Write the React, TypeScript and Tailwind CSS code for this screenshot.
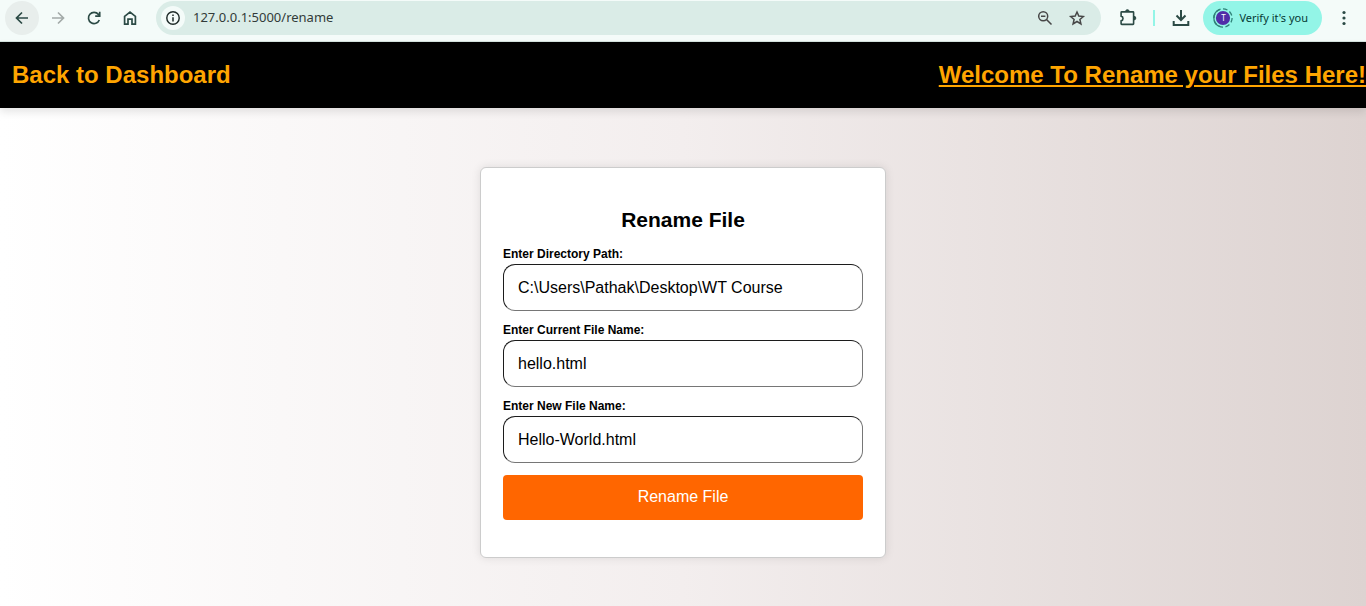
import type { ReactNode } from "react";

type FieldProps = { id: string; label: string; value: string };

function Field({ id, label, value }: FieldProps) {
  return (
    <div>
      <label htmlFor={id} className="block text-xs leading-5 font-bold">
        {label}
      </label>
      <input
        id={id}
        type="text"
        defaultValue={value}
        className="block h-[47px] w-full rounded-xl border border-t-[#1c1c1c] border-r-[#767676] border-b-[#767676] border-l-[#1c1c1c] bg-white px-3.5 text-base text-black outline-none"
      />
    </div>
  );
}

function IconButton({ label, className = "", children }: { label: string; className?: string; children: ReactNode }) {
  return (
    <button type="button" aria-label={label} className={`flex shrink-0 items-center justify-center rounded-full ${className}`}>
      {children}
    </button>
  );
}

function Icon({ children, className = "size-5" }: { children: ReactNode; className?: string }) {
  return (
    <svg viewBox="0 0 20 20" className={className} fill="none" stroke="currentColor" strokeWidth="1.7" aria-hidden="true">
      {children}
    </svg>
  );
}

function BrowserToolbar() {
  return (
    <div className="flex h-[42px] items-start border-b border-[#d5e3df] bg-[#f4fbf9] pt-px font-['Noto_Sans',sans-serif] text-[#2b4a45]">
      <div className="flex shrink-0 gap-0.5 pl-[5px]">
        <IconButton label="Back" className="size-[34px] bg-[#e8eeec]">
          <Icon>
            <path d="M16 10H4.8M10 4.5 4.5 10l5.5 5.5" />
          </Icon>
        </IconButton>
        <IconButton label="Forward" className="size-[34px] text-[#a3aba9]">
          <Icon>
            <path d="M4 10h11.2M10 4.5l5.5 5.5-5.5 5.5" />
          </Icon>
        </IconButton>
        <IconButton label="Reload" className="size-[34px]">
          <Icon>
            <path d="M15.3 12a5.6 5.6 0 1 1-.9-5.6l1.2 1.4" />
            <path d="M15.7 3.8v4.4h-4.5" />
          </Icon>
        </IconButton>
        <IconButton label="Home" className="size-[34px]">
          <Icon>
            <path d="M4.6 16.2V8.3L10 4.1l5.4 4.2v7.9H12v-5H8v5z" />
          </Icon>
        </IconButton>
      </div>
      <div className="ml-[9px] flex h-[34px] min-w-0 flex-1 items-center rounded-full bg-[#daece7] pr-2 pl-[5px] text-[#474747]">
        <IconButton label="View site information" className="size-6 bg-[#f4fbf9] text-[#1f2b29]">
          <Icon className="size-[18px]">
            <circle cx="10" cy="10" r="6.9" strokeWidth="1.6" />
            <path d="M10 9.2v4.6M10 6.2v1.7" />
          </Icon>
        </IconButton>
        <input
          type="text"
          aria-label="Address"
          defaultValue="127.0.0.1:5000/rename"
          className="ml-2 min-w-0 flex-1 bg-transparent text-[13px] text-[#323b39] outline-none"
        />
        <IconButton label="Zoom out" className="size-8">
          <Icon>
            <circle cx="8.2" cy="8.2" r="4.5" strokeWidth="1.5" />
            <path d="m11.5 11.5 5 5M6 8.2h4.4" strokeWidth="1.5" />
          </Icon>
        </IconButton>
        <IconButton label="Bookmark this page" className="size-8">
          <Icon>
            <path
              d="m10 4 1.8 4.1 4.5.4-3.4 3 1 4.4L10 13.5l-3.900 2.4 1-4.4-3.400-3 4.500-.4z"
              strokeWidth="1.5"
            />
          </Icon>
        </IconButton>
      </div>
      <div className="flex h-[34px] shrink-0 items-center">
        <IconButton label="Extensions" className="ml-[10px] size-[34px]">
          <Icon>
            <path
              d="M4.2 3.9H15c.3 0 .6.3.6.6v11.3c0 .3-.3.6-.6.6H3.7c-.3 0-.6-.3-.6-.6v-3a2.4 2.4 0 0 0 0-4.7V4.5c0-.3.3-.6.6-.6z"
              strokeWidth="1.6"
            />
            <path d="M7.6 3.5a1.8 1.8 0 0 1 3.6 0zM16 8.3a1.8 1.8 0 0 1 0 3.6z" fill="currentColor" strokeWidth="1" />
          </Icon>
        </IconButton>
        <span className="ml-2 h-4 w-0.5 bg-[#93f5e7]" />
        <IconButton label="Downloads" className="ml-[9px] size-[34px]">
          <Icon>
            <path d="M10 2v9.500M5.500 7.500 10 12l4.500-4.500M2.700 13v3.900h14.600V13" strokeWidth="2" />
          </Icon>
        </IconButton>
        <button
          type="button"
          className="ml-[5px] flex h-[34px] items-center gap-1.5 rounded-full bg-[#93f5e7] pr-3.5 pl-[10px] text-[11px] whitespace-nowrap text-[#063a34]"
        >
          <span className="relative flex size-5 items-center justify-center">
            <svg viewBox="0 0 20 20" className="absolute inset-0 size-5" fill="none" aria-hidden="true">
              <path d="M7 1.400a9.100 9.100 0 0 0 0 17.200" stroke="#2f8177" strokeWidth="1.300" />
              <circle cx="10" cy="10" r="9.100" stroke="#2f8177" strokeWidth="1.300" strokeDasharray="4.600 2.500" />
              <circle cx="10" cy="10" r="7.100" fill="#512da8" />
            </svg>
            <span className="relative text-[8px] leading-none text-white">T</span>
          </span>
          Verify it's you
        </button>
        <IconButton label="Menu" className="mr-[5px] ml-[5px] size-[34px]">
          <Icon>
            <g fill="currentColor" stroke="none">
              <circle cx="10" cy="4.500" r="1.600" />
              <circle cx="10" cy="10" r="1.600" />
              <circle cx="10" cy="15.500" r="1.600" />
            </g>
          </Icon>
        </IconButton>
      </div>
    </div>
  );
}

export default function App() {
  return (
    <div className="flex min-h-screen flex-col font-['Liberation_Sans',Arial,sans-serif] text-black">
      <BrowserToolbar />
      <header className="relative z-10 flex items-center justify-between bg-black py-[17px] pl-3 text-2xl font-bold text-[#ffa500] shadow-[0_4px_8px_rgba(0,0,0,0.1)]">
        <a href="/dashboard">Back to Dashboard</a>
        <h1 className="underline">Welcome To Rename your Files Here!</h1>
      </header>
      <main className="flex flex-1 items-start justify-center bg-[linear-gradient(to_right,#ffffff_0%,#f3eeee_50%,#ddd3d1_100%)] px-4 pt-[59px] pb-12">
        <form
          onSubmit={(event) => event.preventDefault()}
          className="w-full max-w-[406px] rounded-md border border-[#cccccc] bg-white px-[22px] pt-9 pb-[37px] shadow-[0_0_10px_rgba(0,0,0,0.1)]"
        >
          <h2 className="mb-2 text-center text-[21px] leading-8 font-bold">Rename File</h2>
          <div className="flex flex-col gap-[9px]">
            <Field id="directory" label="Enter Directory Path:" value="C:\Users\Pathak\Desktop\WT Course" />
            <Field id="current-name" label="Enter Current File Name:" value="hello.html" />
            <Field id="new-name" label="Enter New File Name:" value="Hello-World.html" />
          </div>
          <button type="submit" className="mt-3 flex h-[45px] w-full items-center justify-center rounded bg-[#ff6600] pb-0.5 text-base text-white">
            Rename File
          </button>
        </form>
      </main>
    </div>
  );
}
